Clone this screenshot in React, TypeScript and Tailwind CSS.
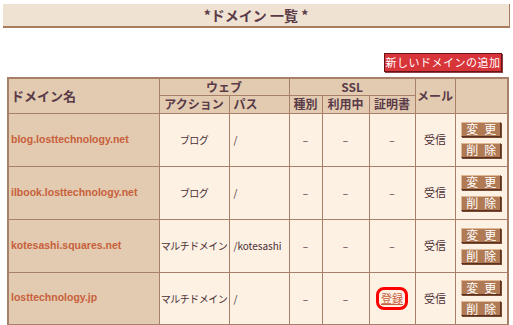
const font = { fontFamily: '"Noto Sans CJK JP", "Liberation Sans", sans-serif' };
const latin = { fontFamily: '"Liberation Sans", "Noto Sans CJK JP", sans-serif' };

type Row = { domain: string; action: string; path: string; cert: string };

const rows: Row[] = [
  { domain: "blog.losttechnology.net", action: "ブログ", path: "/", cert: "–" },
  { domain: "ilbook.losttechnology.net", action: "ブログ", path: "/", cert: "–" },
  { domain: "kotesashi.squares.net", action: "マルチドメイン", path: "/kotesashi", cert: "–" },
  { domain: "losttechnology.jp", action: "マルチドメイン", path: "/", cert: "登録" },
];

function SmallButton({ label }: { label: string }) {
  return (
    <button className="h-[15px] w-[40px] flex items-center justify-center gap-[6px] whitespace-nowrap border border-t-[#e0b898] border-l-[#e0b898] border-r-[#5a3020] border-b-[#5a3020] bg-[#b07a55] text-[12px] leading-none text-white shadow-[1px_1px_0_#7a4a30]">
      {label.split("").map((c) => (
        <span key={c}>{c}</span>
      ))}
    </button>
  );
}

export default function App() {
  const th = "border border-[#a8806a] bg-[#e2cbb0] text-[#5a3a48] font-bold text-[12px] leading-none";
  const td = "border border-[#a8806a] bg-[#fdf1e4] text-[#4a2e34] text-[10px]";
  return (
    <div className="w-[513px] h-[325px] bg-white overflow-hidden" style={font}>
      <div className="mx-[3px] mt-[4px] h-[24px] bg-[#efe2d2] border-b-2 border-r border-[#a87c5c] flex items-center justify-center">
        <span className="text-[14px] font-bold text-[#5a3a48]">*ドメイン 一覧 *</span>
      </div>
      <div className="flex justify-end pr-[11px] mt-[25px]">
        <button className="h-[19px] w-[118px] flex items-center justify-center whitespace-nowrap bg-[#d8353a] border border-[#6a1418] text-white text-[11px] tracking-[0.5px] leading-none shadow-[1px_1px_0_#8a4040]">
          新しいドメインの追加
        </button>
      </div>
      <table className="ml-[7px] mt-[5px] w-[500px] border-collapse border-2 border-[#a8806a] table-fixed">
        <colgroup>
          <col className="w-[151px]" />
          <col className="w-[70px]" />
          <col className="w-[60px]" />
          <col className="w-[33px]" />
          <col className="w-[47px]" />
          <col className="w-[46px]" />
          <col className="w-[40px]" />
          <col className="w-[53px]" />
        </colgroup>
        <thead>
          <tr className="h-[17px]">
            <th rowSpan={2} className={`${th} text-left pl-[2px] text-[13px]`}>ドメイン名</th>
            <th colSpan={2} className={th}>ウェブ</th>
            <th colSpan={3} className={th}>SSL</th>
            <th rowSpan={2} className={th}>メール</th>
            <th rowSpan={2} className={th}></th>
          </tr>
          <tr className="h-[18px]">
            <th className={th}>アクション</th>
            <th className={`${th} text-left pl-[4px]`}>パス</th>
            <th className={th}>種別</th>
            <th className={th}>利用中</th>
            <th className={th}>証明書</th>
          </tr>
        </thead>
        <tbody>
          {rows.map((r) => (
            <tr key={r.domain} className="h-[53px]">
              <td
                className="border border-[#a8806a] bg-[#e2cbb0] pl-[2px] text-[10.5px] font-bold text-[#c8603c] whitespace-nowrap"
                style={latin}
              >
                {r.domain}
              </td>
              <td className={`${td} text-center whitespace-nowrap tracking-[-0.5px]`}>{r.action}</td>
              <td className={`${td} pl-[4px] whitespace-nowrap`}>{r.path}</td>
              <td className={`${td} text-center`}>–</td>
              <td className={`${td} text-center`}>–</td>
              <td className={`${td} text-center`}>
                {r.cert === "登録" ? (
                  <span className="inline-flex items-center justify-center w-[32px] h-[23px] rounded-[8px] border-[3px] border-[#ff0000]">
                    <a href="#" className="underline text-[#c8603c] text-[11px] leading-none">登録</a>
                  </span>
                ) : (
                  r.cert
                )}
              </td>
              <td className={`${td} text-center text-[11px]`}>受信</td>
              <td className={`${td}`}>
                <div className="flex flex-col items-center gap-[6px]">
                  <SmallButton label="変更" />
                  <SmallButton label="削除" />
                </div>
              </td>
            </tr>
          ))}
        </tbody>
      </table>
    </div>
  );
}
